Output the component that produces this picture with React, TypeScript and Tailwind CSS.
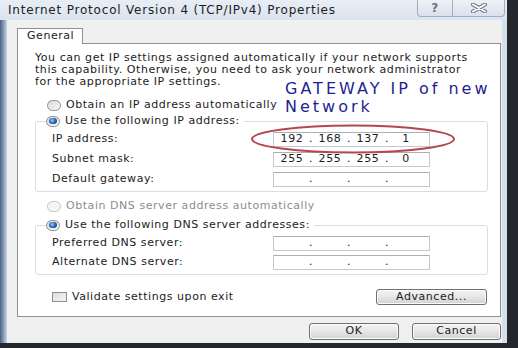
import React from 'react'

const font = { fontFamily: '"DejaVu Sans", Verdana, sans-serif' }

function Radio({ checked, disabled }: { checked?: boolean; disabled?: boolean }) {
  return (
    <span
      className={`flex h-[11px] w-[14px] shrink-0 items-center justify-center rounded-full border ${
        disabled ? 'border-[#c4c4c4] bg-[#f4f4f4]' : 'border-[#8e8f8f] bg-gradient-to-br from-[#d9d9d9] to-[#f7f7f7]'
      }`}
    >
      {checked && (
        <span className="h-[6px] w-[8px] rounded-full bg-[radial-gradient(circle_at_40%_40%,#9fd2ff_0%,#2f6fb8_45%,#0d2f5e_100%)]" />
      )}
    </span>
  )
}

function IpField({ parts }: { parts?: string[] }) {
  const p = parts ?? ['', '', '', '']
  return (
    <div className="flex h-[15px] w-[157px] items-center border border-[#c5c9cf] border-t-[#abadb3] bg-white pl-px text-[11px] tracking-[0.6px] text-[#1c1c1c]">
      <span className="w-[34px] text-center">{p[0]}</span>
      <span className="w-[4px] text-center">.</span>
      <span className="w-[34px] text-center">{p[1]}</span>
      <span className="w-[4px] text-center">.</span>
      <span className="w-[34px] text-center">{p[2]}</span>
      <span className="w-[4px] text-center">.</span>
      <span className="w-[34px] text-center">{p[3]}</span>
    </div>
  )
}

function Row({ label, parts }: { label: string; parts?: string[] }) {
  return (
    <div className="ml-[6px] flex h-[16px] items-center">
      <span className="w-[221px] text-[11px] text-[#1c1c1c]">{label}</span>
      <IpField parts={parts} />
    </div>
  )
}

function Button({ children, className }: { children: React.ReactNode; className: string }) {
  return (
    <div
      className={`flex items-center justify-center rounded-[3px] border border-[#707070] bg-gradient-to-b from-[#f4f4f4] via-[#e6e6e6] to-[#d2d2d2] text-[11px] text-[#1c1c1c] shadow-[inset_0_0_0_1px_#fbfbfb] ${className}`}
    >
      {children}
    </div>
  )
}

export default function App() {
  return (
    <div className="h-[348px] w-[518px] overflow-hidden bg-[#24272c] tracking-[0.55px]" style={font}>
      <div className="relative flex h-[343px] w-[507px] flex-col bg-[#cdd9e6]">
        {/* title bar */}
        <div className="flex h-[20px] shrink-0 bg-gradient-to-b from-[#e9eef5] to-[#dae3ee]">
          <div className="flex-1 pl-[8px] pt-[3px] text-[12px] leading-[14px] tracking-[0.8px] text-[#1e1e1e]">
            Internet Protocol Version 4 (TCP/IPv4) Properties
          </div>
          <div className="mr-[2px] flex h-[17px]">
            <div className="flex w-[36px] items-center justify-center rounded-bl-[4px] border border-t-0 border-[#9fb0c6] bg-gradient-to-b from-[#eef2f7] to-[#d8e1ec] text-[12px] font-bold text-[#6b7380]">
              ?
            </div>
            <div className="flex w-[52px] items-center justify-center rounded-br-[4px] border border-l-0 border-t-0 border-[#9fb0c6] bg-gradient-to-b from-[#eef2f7] to-[#d8e1ec]">
              <svg width="20" height="10" viewBox="0 0 20 10">
                <path d="M4 1.5 L16 8.5 M16 1.5 L4 8.5" stroke="#6e7786" strokeWidth="4" strokeLinecap="round" />
                <path d="M4 1.5 L16 8.5 M16 1.5 L4 8.5" stroke="#ffffff" strokeWidth="2" strokeLinecap="round" />
              </svg>
            </div>
          </div>
        </div>

        <div className="flex flex-1">
          <div className="w-[7px] bg-gradient-to-r from-[#4d6180] to-[#c9d6e5]" />
          <div className="flex flex-1 flex-col bg-[#f0f0f0] pl-[10px] pt-[8px]">
            {/* tab */}
            <div className="relative z-10 -mb-px flex h-[16px] w-[66px] items-center border border-b-0 border-[#8e9099] bg-white pl-[9px] text-[11px] text-[#1c1c1c]">
              General
            </div>

            {/* panel */}
            <div className="flex h-[274px] w-[484px] flex-col border border-[#8e9099] bg-white pl-[17px] pr-[12px] text-[#1c1c1c]">
              <p className="mt-[8px] whitespace-nowrap text-[11px] leading-[12px]">
                You can get IP settings assigned automatically if your network supports
                <br />
                this capability. Otherwise, you need to ask your network administrator
                <br />
                for the appropriate IP settings.
              </p>

              <div className="ml-[12px] mt-[10px] flex h-[14px] items-center gap-[5px] text-[11px]">
                <Radio />
                <span>Obtain an IP address automatically</span>
              </div>

              <fieldset className="mt-[2px] flex flex-col gap-[4px] rounded-[3px] border border-[#d5dfe5] pb-[4px] pl-[10px] pt-[3px]">
                <legend className="flex h-[14px] items-center gap-[5px] pr-[4px] text-[11px]">
                  <Radio checked />
                  <span>Use the following IP address:</span>
                </legend>
                <Row label="IP address:" parts={['192', '168', '137', '1']} />
                <Row label="Subnet mask:" parts={['255', '255', '255', '0']} />
                <Row label="Default gateway:" />
              </fieldset>

              <div className="ml-[12px] mt-[7px] flex h-[14px] items-center gap-[5px] text-[11px] text-[#8d8d8d]">
                <Radio disabled />
                <span>Obtain DNS server address automatically</span>
              </div>

              <fieldset className="mt-[5px] flex flex-col gap-[3px] rounded-[3px] border border-[#d5dfe5] pb-[4px] pl-[10px] pt-[3px]">
                <legend className="flex h-[14px] items-center gap-[5px] pr-[4px] text-[11px]">
                  <Radio checked />
                  <span>Use the following DNS server addresses:</span>
                </legend>
                <Row label="Preferred DNS server:" />
                <Row label="Alternate DNS server:" />
              </fieldset>

              <div className="mt-[14px] flex h-[16px] items-center">
                <span className="ml-[17px] h-[10px] w-[15px] border border-[#8f8f8f] bg-gradient-to-br from-[#dcdcdc] to-[#f6f6f6]" />
                <span className="ml-[5px] text-[11px]">Validate settings upon exit</span>
                <Button className="ml-auto mr-px h-[16px] w-[111px]">Advanced...</Button>
              </div>
            </div>

            {/* dialog buttons */}
            <div className="mt-[6px] flex justify-end gap-[13px] pr-px">
              <Button className="h-[17px] w-[90px]">OK</Button>
              <Button className="h-[17px] w-[89px]">Cancel</Button>
            </div>
          </div>
          <div className="w-[5px] bg-[#d6e0ea]" />
        </div>

        {/* annotation drawn over the dialog */}
        <div className="absolute left-[285px] top-[80px] text-[16px] leading-[18px] tracking-[3px] text-[#1f1f92]">
          GATEWAY IP of new
          <br />
          Network
        </div>
        <svg className="absolute left-[249px] top-[123px]" width="208" height="32" viewBox="0 0 208 32">
          <ellipse cx="104" cy="16" rx="101" ry="13.5" fill="none" stroke="#b3474c" strokeWidth="2" />
        </svg>
      </div>
    </div>
  )
}
